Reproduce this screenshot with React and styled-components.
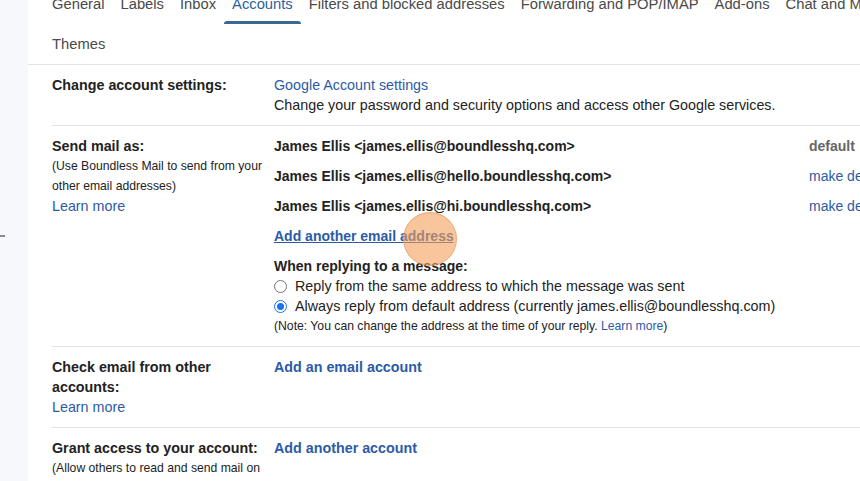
import styled, { createGlobalStyle } from "styled-components";

const GlobalStyle = createGlobalStyle`
  html, body {
    margin: 0;
    padding: 0;
    background: #f6f8fc;
    overflow: hidden;
  }
  body {
    font-family: "Liberation Sans", Arial, sans-serif;
    color: #222;
  }
`;

const Page = styled.div`
  display: flex;
  width: 860px;
  height: 481px;
  overflow: hidden;
`;

const Sidebar = styled.aside`
  flex: 0 0 28px;
  padding-top: 235px;
  box-sizing: border-box;
`;

const Dash = styled.div`
  width: 5px;
  height: 1.5px;
  background: #8a8a8a;
`;

const Main = styled.main`
  flex: 0 0 900px;
  background: #fff;
`;

const TabBar = styled.nav`
  display: flex;
  flex-wrap: wrap;
  margin-top: -16px;
  padding: 0 0 0 16px;
  border-bottom: 1px solid #e3e3e3;
`;

const Tab = styled.div`
  position: relative;
  height: 40px;
  line-height: 40px;
  padding: 0 8px;
  font-size: 14.75px;
  color: ${(p) => (p.$active ? "#2c5f9e" : "#4a4a4a")};
  white-space: nowrap;

  &::after {
    content: "";
    display: ${(p) => (p.$active ? "block" : "none")};
    position: absolute;
    left: 0;
    right: 0;
    bottom: 0;
    height: 3px;
    border-radius: 3px 3px 0 0;
    background: #3a6793;
  }
`;

const Row = styled.section`
  display: grid;
  grid-template-columns: 210px 1fr;
  column-gap: 12px;
  margin-left: 24px;
  padding: 10px 0;
  border-bottom: 1px solid #e3e3e3;
  font-size: 14.3px;
  line-height: 20px;
`;

const Label = styled.div`
  font-weight: bold;
  color: #222;
`;

const Sub = styled.div`
  font-size: 12.2px;
  line-height: 20px;
  color: #222;
`;

const Link = styled.a`
  color: #2b5ba6;
  font-weight: ${(p) => (p.$bold ? "bold" : "normal")};
  text-decoration: ${(p) => (p.$underline ? "underline" : "none")};
  cursor: pointer;
`;

const Block = styled.div`
  display: block;
`;

const Addresses = styled.div`
  display: grid;
  grid-template-columns: 535px auto;
  row-gap: 10px;
  margin-bottom: 10px;
  font-size: 14px;
  white-space: nowrap;
`;

const Address = styled.div`
  font-weight: bold;
  color: #222;
`;

const DefaultTag = styled.div`
  font-weight: bold;
  color: #666;
`;

const AddLine = styled.div`
  position: relative;
  margin-bottom: 10px;
  font-size: 14px;
`;

const ClickMark = styled.span`
  position: absolute;
  left: 129px;
  top: -14px;
  width: 54px;
  height: 54px;
  border-radius: 50%;
  background: rgba(244, 158, 92, 0.6);
  border: 1px solid rgba(230, 140, 80, 0.5);
  box-sizing: border-box;
  pointer-events: none;
`;

const Heading = styled.div`
  font-weight: bold;
  font-size: 14px;
`;

const RadioRow = styled.label`
  display: flex;
  align-items: center;
  gap: 8px;
  white-space: nowrap;
`;

const Radio = styled.span`
  width: 13px;
  height: 13px;
  box-sizing: border-box;
  border-radius: 50%;
  border: 1px solid ${(p) => (p.$checked ? "#1a73e8" : "#767676")};
  display: flex;
  align-items: center;
  justify-content: center;
  background: #fff;

  &::after {
    content: "";
    display: ${(p) => (p.$checked ? "block" : "none")};
    width: 7px;
    height: 7px;
    border-radius: 50%;
    background: #1a73e8;
  }
`;

const Note = styled.div`
  margin-top: 1px;
  font-size: 12.2px;
  line-height: 19px;
`;

const tabs = [
  "General",
  "Labels",
  "Inbox",
  "Accounts",
  "Filters and blocked addresses",
  "Forwarding and POP/IMAP",
  "Add-ons",
  "Chat and Meet",
  "Themes",
];

const senders = [
  { addr: "james.ellis@boundlesshq.com", isDefault: true },
  { addr: "james.ellis@hello.boundlesshq.com" },
  { addr: "james.ellis@hi.boundlesshq.com" },
];

export default function App() {
  return (
    <>
      <GlobalStyle />
      <Page>
        <Sidebar>
          <Dash />
        </Sidebar>
        <Main>
          <TabBar>
            {tabs.map((t) => (
              <Tab key={t} $active={t === "Accounts"}>
                {t}
              </Tab>
            ))}
          </TabBar>

          <Row>
            <Label>Change account settings:</Label>
            <div>
              <Block>
                <Link>Google Account settings</Link>
              </Block>
              <Block>
                Change your password and security options and access other
                Google services.
              </Block>
            </div>
          </Row>

          <Row>
            <div>
              <Label>Send mail as:</Label>
              <Sub>(Use Boundless Mail to send from your other email addresses)</Sub>
              <Link>Learn more</Link>
            </div>
            <div>
              <Addresses>
                {senders.map((s) => (
                  <>
                    <Address key={s.addr}>
                      James Ellis &lt;{s.addr}&gt;
                    </Address>
                    {s.isDefault ? (
                      <DefaultTag>default</DefaultTag>
                    ) : (
                      <Link>make default</Link>
                    )}
                  </>
                ))}
              </Addresses>
              <AddLine>
                <Link $bold $underline>
                  Add another email address
                </Link>
                <ClickMark />
              </AddLine>
              <Heading>When replying to a message:</Heading>
              <RadioRow>
                <Radio />
                Reply from the same address to which the message was sent
              </RadioRow>
              <RadioRow>
                <Radio $checked />
                Always reply from default address (currently
                james.ellis@boundlesshq.com)
              </RadioRow>
              <Note>
                (Note: You can change the address at the time of your reply.{" "}
                <Link>Learn more</Link>)
              </Note>
            </div>
          </Row>

          <Row>
            <div>
              <Label>Check email from other accounts:</Label>
              <Link>Learn more</Link>
            </div>
            <div>
              <Link $bold>Add an email account</Link>
            </div>
          </Row>

          <Row>
            <div>
              <Label>Grant access to your account:</Label>
              <Sub>(Allow others to read and send mail on your behalf)</Sub>
            </div>
            <div>
              <Link $bold>Add another account</Link>
            </div>
          </Row>
        </Main>
      </Page>
    </>
  );
}
